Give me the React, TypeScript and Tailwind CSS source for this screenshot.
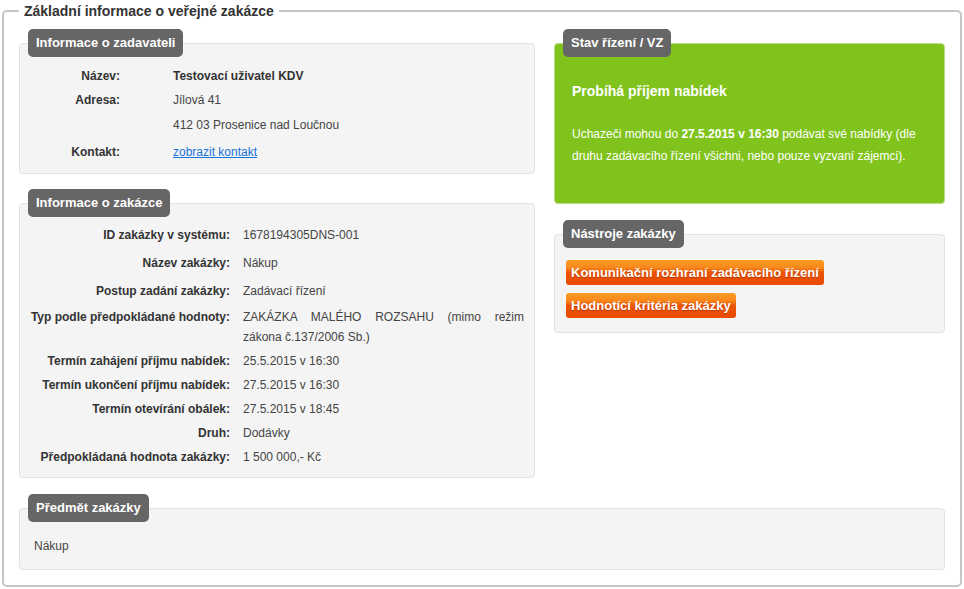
import type { ReactNode } from 'react'

function Panel({ title, children, boxClass }: { title: string; children: ReactNode; boxClass: string }) {
  return (
    <div>
      <div className="relative z-10 flex">
        <div className="ml-[9px] h-[28px] rounded-[5px] bg-[#666666] px-[8px] text-[13px] font-bold leading-[28px] text-white">
          {title}
        </div>
      </div>
      <div className={`-mt-[14px] rounded-[4px] border ${boxClass}`}>{children}</div>
    </div>
  )
}

const zadavatel = [
  { label: 'Název:', value: <span className="font-bold text-[#333]">Testovací uživatel KDV</span>, h: 'h-[24px]' },
  { label: 'Adresa:', value: 'Jílová 41', h: 'h-[24px]' },
  { label: '', value: '412 03 Prosenice nad Loučnou', h: 'h-[26px]' },
  {
    label: 'Kontakt:',
    value: <a href="#" className="text-[#1a73d9] underline">zobrazit kontakt</a>,
    h: 'h-[28px]',
  },
]

const zakazka = [
  { label: 'ID zakázky v systému:', value: '1678194305DNS-001', h: 'h-[28px]' },
  { label: 'Název zakázky:', value: 'Nákup', h: 'h-[28px]' },
  { label: 'Postup zadání zakázky:', value: 'Zadávací řízení', h: 'h-[26px]' },
  {
    label: 'Typ podle předpokládané hodnoty:',
    value: 'ZAKÁZKA MALÉHO ROZSAHU (mimo režim zákona č.137/2006 Sb.)',
    h: 'h-[44px]',
  },
  { label: 'Termín zahájení příjmu nabídek:', value: '25.5.2015 v 16:30', h: 'h-[24px]' },
  { label: 'Termín ukončení příjmu nabídek:', value: '27.5.2015 v 16:30', h: 'h-[24px]' },
  { label: 'Termín otevírání obálek:', value: '27.5.2015 v 18:45', h: 'h-[24px]' },
  { label: 'Druh:', value: 'Dodávky', h: 'h-[24px]' },
  { label: 'Předpokládaná hodnota zakázky:', value: '1 500 000,- Kč', h: 'h-[24px]' },
]

const btn =
  'flex h-[25px] items-center self-start rounded-[3px] bg-[linear-gradient(#fb9b24_0%,#f7891c_30%,#ec5404_50%,#e94a00_100%)] pl-[5px] pr-[5px] text-[13px] font-bold text-white [text-shadow:0_1px_1px_rgba(120,30,0,0.45)]'

export default function App() {
  return (
    <div className="h-[589px] w-[964px] bg-white font-['Liberation_Sans',Arial,sans-serif] text-[12px] text-[#444]">
      <fieldset className="ml-[2px] w-[960px] rounded-[5px] border-2 border-[#c6c6c6] px-[15px] pb-[15px] pt-[7px]">
        <legend className="px-[5px] text-[14px] font-bold leading-[22px] text-[#333]">
          Základní informace o veřejné zakázce
        </legend>

        <div className="flex gap-[19px]">
          {/* left column */}
          <div className="flex w-[516px] flex-col gap-[15px]">
            <Panel title="Informace o zadavateli" boxClass="border-[#e2e2e2] bg-[#f4f4f4] pt-[20px] pb-[7px]">
              {zadavatel.map((r, i) => (
                <div key={i} className={`grid grid-cols-[100px_1fr] gap-x-[53px] ${r.h} items-center leading-[20px]`}>
                  <div className="text-right font-bold text-[#333]">{r.label}</div>
                  <div>{r.value}</div>
                </div>
              ))}
            </Panel>

            <Panel title="Informace o zakázce" boxClass="border-[#e2e2e2] bg-[#f4f4f4] pt-[19px] pb-[8px] pr-[10px]">
              {zakazka.map((r, i) => (
                <div key={i} className={`grid grid-cols-[210px_1fr] gap-x-[13px] ${r.h} items-center leading-[20px]`}>
                  <div className="self-start pt-[2px] text-right font-bold text-[#333]">{r.label}</div>
                  <div className="self-start pt-[2px] text-justify">{r.value}</div>
                </div>
              ))}
            </Panel>
          </div>

          {/* right column */}
          <div className="flex w-[391px] flex-col gap-[16px]">
            <Panel title="Stav řízení / VZ" boxClass="h-[161px] border-[#b9dc8a] bg-[#80c31c] px-[17px] pt-[37px] text-white">
              <div className="text-[14px] font-bold leading-[20px]">Probíhá příjem nabídek</div>
              <p className="mt-[22px] leading-[22px]">
                Uchazeči mohou do <b>27.5.2015 v 16:30</b> podávat své nabídky (dle druhu zadávacího řízení všichni, nebo
                pouze vyzvaní zájemci).
              </p>
            </Panel>

            <Panel title="Nástroje zakázky" boxClass="flex flex-col gap-[8px] border-[#e2e2e2] bg-[#f4f4f4] px-[11px] pt-[25px] pb-[14px]">
              <a href="#" className={btn}>Komunikační rozhraní zadávacího řízení</a>
              <a href="#" className={btn}>Hodnotící kritéria zakázky</a>
            </Panel>
          </div>
        </div>

        <div className="mt-[16px]">
          <Panel title="Předmět zakázky" boxClass="border-[#e2e2e2] bg-[#f4f4f4] px-[14px] pt-[27px] pb-[13px]">
            <div className="leading-[20px]">Nákup</div>
          </Panel>
        </div>
      </fieldset>
    </div>
  )
}
